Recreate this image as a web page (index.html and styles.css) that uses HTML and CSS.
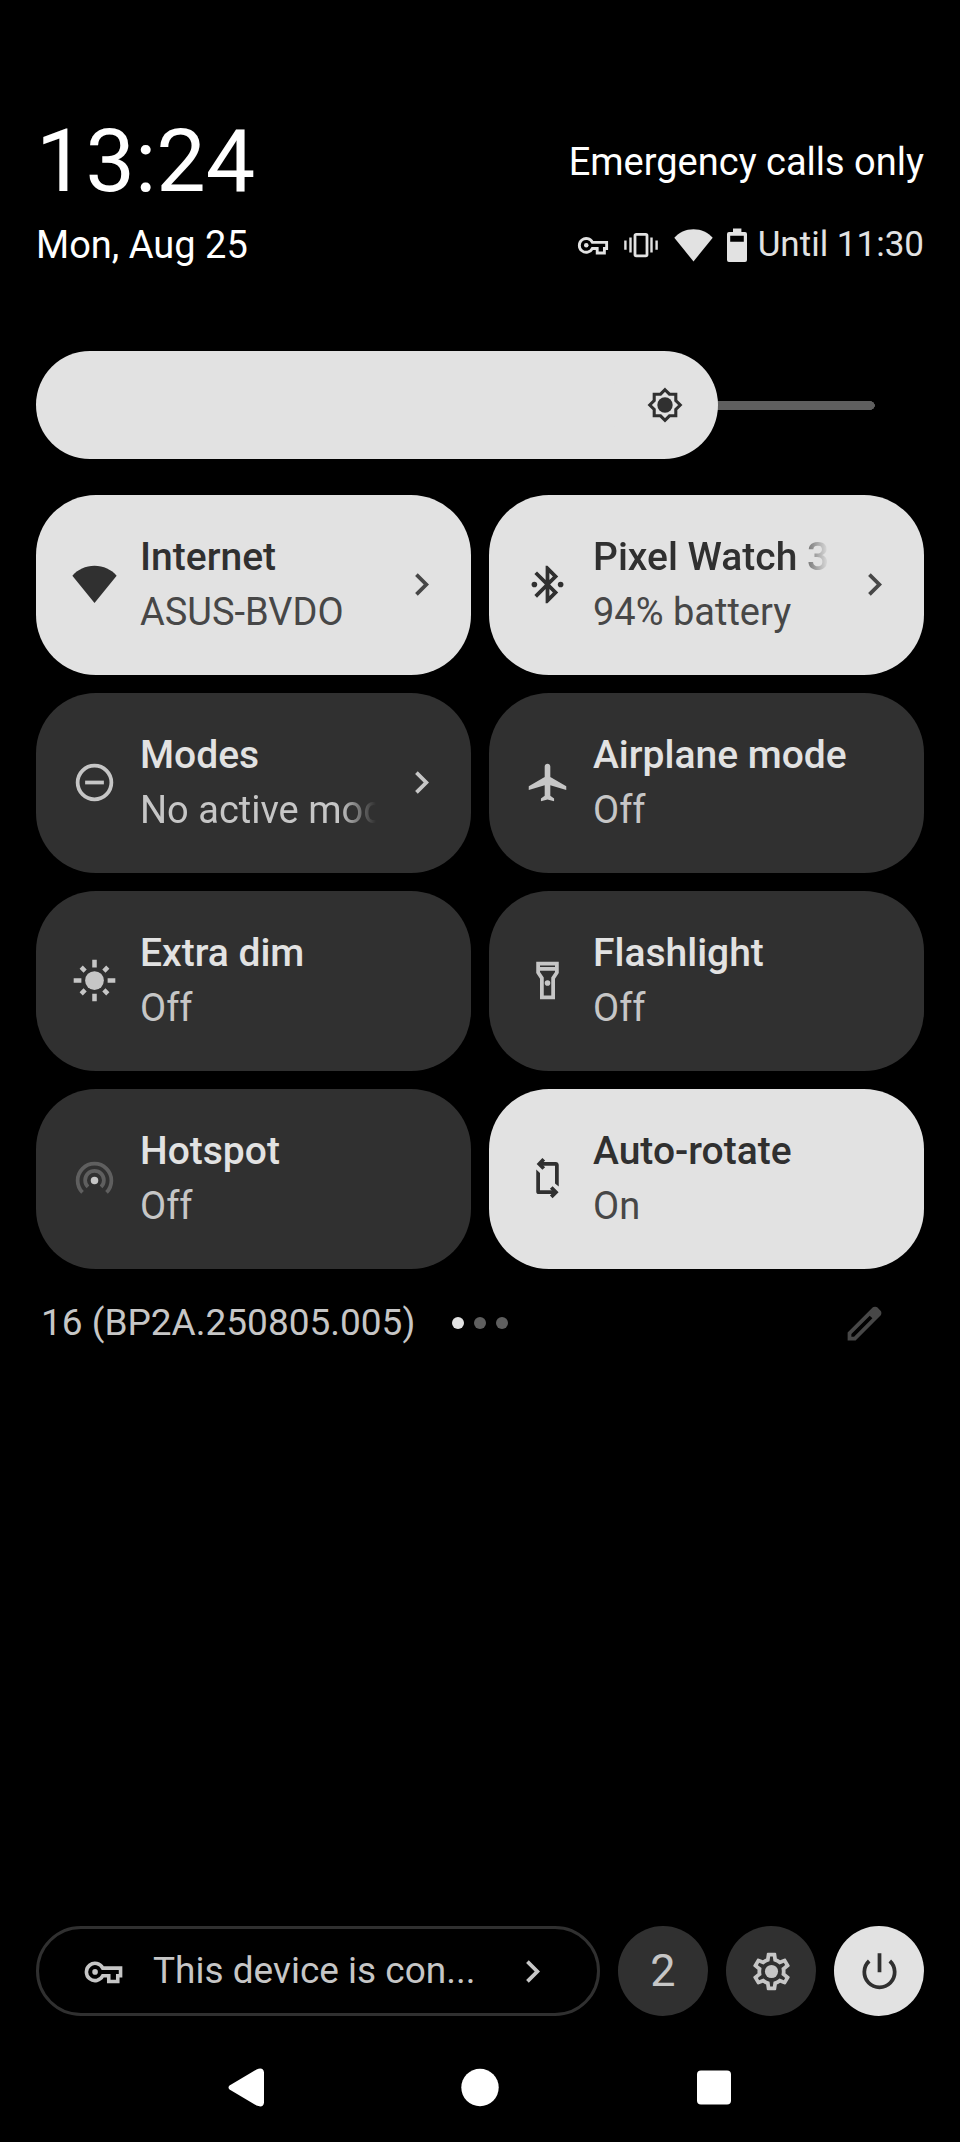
FILE: index.html
```html
<!DOCTYPE html>
<html lang="en">
<head>
  <meta charset="UTF-8">
  <meta name="viewport" content="width=device-width, initial-scale=1.0">
  <title>Quick Settings</title>
  <link rel="stylesheet" href="styles.css">
</head>
<body>

<!-- Shared icons -->
<svg class="sprite" aria-hidden="true">
  <symbol id="wifi" viewBox="0 0 24 24">
    <path d="M12 21.8.2 7.3C2.9 4.1 7.3 2 12 2s9.1 2.1 11.8 5.3z"/>
  </symbol>
  <symbol id="chevron" viewBox="0 0 24 24">
    <path d="M10 6 8.59 7.41 13.17 12l-4.58 4.59L10 18l6-6z"/>
  </symbol>
  <symbol id="key" viewBox="0 0 24 24">
    <path fill="none" stroke="currentColor" stroke-width="1.9" d="M11.6 10.2a4.6 4.6 0 1 0 0 4.1h3.2v3h4.8v-3h1.5v-4.1z"/>
    <circle cx="7.5" cy="12.2" r="1.5"/>
  </symbol>
</svg>

<header class="header">
  <div class="header-row">
    <time class="clock">13:24</time>
    <span class="carrier">Emergency calls only</span>
  </div>
  <div class="header-row">
    <span class="date">Mon, Aug 25</span>
    <div class="status">
      <svg class="status-key"><use href="#key"/></svg>
      <svg class="status-vibrate" viewBox="0 0 34 26">
        <rect x="11" y="2.4" width="12" height="21.4" rx="1.2" fill="none" stroke="currentColor" stroke-width="2.8"/>
        <path d="M5.3 5.6h2.4v15H5.3zM.2 8.6h2.4v9.2H.2zM26.3 5.6h2.4v15h-2.4zM31.4 8.6h2.4v9.2h-2.4z"/>
      </svg>
      <svg class="status-wifi"><use href="#wifi"/></svg>
      <svg class="status-battery" viewBox="0 0 20 34">
        <path fill-rule="evenodd" d="M6 .5h8.4V4H18a2 2 0 0 1 2 2v26a2 2 0 0 1-2 2H2a2 2 0 0 1-2-2V6a2 2 0 0 1 2-2h4zM3.2 7.8v6h13.6v-6z"/>
      </svg>
      <span class="until">Until 11:30</span>
    </div>
  </div>
</header>

<main>
  <div class="brightness">
    <input class="brightness-slider" type="range" min="0" max="1000" value="785" aria-label="Brightness">
    <svg class="brightness-icon" viewBox="0 0 24 24">
      <path fill="none" stroke="currentColor" stroke-width="2" d="M12 2.1 14.9 5H19v4.1l2.9 2.9-2.9 2.9V19h-4.1L12 21.9 9.1 19H5v-4.1L2.1 12 5 9.1V5h4.1z"/>
      <circle cx="12" cy="12" r="5"/>
    </svg>
  </div>

  <section class="tiles">
    <button class="tile active">
      <svg class="icon"><use href="#wifi"/></svg>
      <span class="tile-text">
        <span class="tile-title">Internet</span>
        <span class="tile-state">ASUS-BVDO</span>
      </span>
      <svg class="icon chevron"><use href="#chevron"/></svg>
    </button>

    <button class="tile active">
      <svg class="icon" viewBox="0 0 24 24">
        <path d="M17.71 7.71 12 2h-1v7.59L6.41 5 5 6.41 10.59 12 5 17.59 6.41 19 11 14.41V22h1l5.71-5.71-4.3-4.29zM13 5.83l1.88 1.88L13 9.59zm1.88 10.46L13 18.17v-3.76z"/>
        <circle cx="5" cy="12" r="1.5"/>
        <circle cx="19" cy="12" r="1.5"/>
      </svg>
      <span class="tile-text">
        <span class="tile-title fade">Pixel Watch 3</span>
        <span class="tile-state">94% battery</span>
      </span>
      <svg class="icon chevron"><use href="#chevron"/></svg>
    </button>

    <button class="tile">
      <svg class="icon" viewBox="0 0 24 24">
        <circle cx="12" cy="12" r="9" fill="none" stroke="currentColor" stroke-width="2"/>
        <path d="M7 11h10v2H7z"/>
      </svg>
      <span class="tile-text">
        <span class="tile-title">Modes</span>
        <span class="tile-state fade">No active modes</span>
      </span>
      <svg class="icon chevron"><use href="#chevron"/></svg>
    </button>

    <button class="tile">
      <svg class="icon" viewBox="0 0 24 24">
        <path d="M22 16v-2l-8.5-5V3.5C13.5 2.67 12.83 2 12 2s-1.5.67-1.5 1.5V9L2 14v2l8.5-2.5V19l-2 1.5V22l3.5-1 3.5 1v-1.5l-2-1.5v-5.5z"/>
      </svg>
      <span class="tile-text">
        <span class="tile-title">Airplane mode</span>
        <span class="tile-state">Off</span>
      </span>
    </button>

    <button class="tile">
      <svg class="icon" viewBox="0 0 24 24">
        <circle cx="12" cy="12" r="5"/>
        <path fill="none" stroke="currentColor" stroke-width="2.4" d="M12 .9V5M12 19v4.1M.9 12H5M19 12h4.1M4.9 4.9 7 7M17 17l2.1 2.1M4.9 19.1 7 17M17 7l2.1-2.1"/>
      </svg>
      <span class="tile-text">
        <span class="tile-title">Extra dim</span>
        <span class="tile-state">Off</span>
      </span>
    </button>

    <button class="tile">
      <svg class="icon" viewBox="0 0 24 24">
        <path fill-rule="evenodd" d="M6 2h12v6l-2 3v11H8V11L6 8zm2 2v.8h8V4zm0 2.8v.6l2 3V20h4v-9.6l2-3v-.6z"/>
        <circle cx="12" cy="13.3" r="1.5"/>
      </svg>
      <span class="tile-text">
        <span class="tile-title">Flashlight</span>
        <span class="tile-state">Off</span>
      </span>
    </button>

    <button class="tile">
      <svg class="icon" viewBox="0 0 24 24">
        <path class="waves" d="M5.6 19.4a9 9 0 1 1 12.8 0M8.5 16.5a5 5 0 1 1 7 0"/>
        <circle cx="12" cy="13" r="2"/>
      </svg>
      <span class="tile-text">
        <span class="tile-title">Hotspot</span>
        <span class="tile-state">Off</span>
      </span>
    </button>

    <button class="tile active">
      <svg class="icon" viewBox="0 0 24 24">
        <path d="M8 3.2h8.6A1.5 1.5 0 0 1 18 4.6v11.7l-2-1.7V5.2H8zM6 7.2l2 1.9v9.2h8v2H7.4A1.4 1.4 0 0 1 6 18.9z"/>
        <path fill="none" stroke="currentColor" stroke-width="2" d="M10 1.7 7.6 4.2 10 6.7M14 16.8l2.5 2.5-2.5 2.5"/>
      </svg>
      <span class="tile-text">
        <span class="tile-title">Auto-rotate</span>
        <span class="tile-state">On</span>
      </span>
    </button>
  </section>

  <div class="pager">
    <span class="build">16 (BP2A.250805.005)</span>
    <div class="dots">
      <span class="dot current"></span>
      <span class="dot"></span>
      <span class="dot"></span>
    </div>
    <button class="edit" aria-label="Edit tiles">
      <svg class="icon" viewBox="0 0 24 24">
        <path fill-rule="evenodd" d="M5 19h1.425L16.2 9.225 14.775 7.8 5 17.575zm-2 2v-4.25L16.2 3.575q.3-.275.663-.425t.762-.15q.4 0 .775.15t.65.45L20.425 5q.3.275.438.65T21 6.4q0 .4-.137.763t-.438.662L7.25 21z"/>
      </svg>
    </button>
  </div>
</main>

<footer>
  <div class="actions">
    <button class="security">
      <svg class="icon"><use href="#key"/></svg>
      <span class="security-text">This device is con...</span>
      <svg class="icon"><use href="#chevron"/></svg>
    </button>
    <button class="round count" aria-label="2 active apps">2</button>
    <button class="round" aria-label="Settings">
      <svg class="icon" viewBox="0 0 24 24">
        <path d="M19.43 12.98c.04-.32.07-.64.07-.98s-.03-.66-.07-.98l2.11-1.65c.19-.15.24-.42.12-.64l-2-3.46c-.09-.16-.26-.25-.44-.25-.06 0-.12.01-.17.03l-2.49 1c-.52-.4-1.08-.73-1.69-.98l-.38-2.65C14.46 2.18 14.25 2 14 2h-4c-.25 0-.46.18-.49.42l-.38 2.65c-.61.25-1.17.59-1.69.98l-2.49-1c-.06-.02-.12-.03-.18-.03-.17 0-.34.09-.43.25l-2 3.46c-.13.22-.07.49.12.64l2.11 1.65c-.04.32-.07.65-.07.98s.03.66.07.98l-2.11 1.65c-.19.15-.24.42-.12.64l2 3.46c.09.16.26.25.44.25.06 0 .12-.01.17-.03l2.49-1c.52.4 1.08.73 1.69.98l.38 2.65c.03.24.24.42.49.42h4c.25 0 .46-.18.49-.42l.38-2.65c.61-.25 1.17-.59 1.69-.98l2.49 1c.06.02.12.03.18.03.17 0 .34-.09.43-.25l2-3.46c.12-.22.07-.49-.12-.64l-2.11-1.65zm-1.98-1.71c.04.31.05.52.05.73 0 .21-.02.43-.05.73l-.14 1.13.89.7 1.08.84-.7 1.21-1.27-.51-1.04-.42-.9.68c-.43.32-.84.56-1.25.73l-1.06.43-.16 1.13-.2 1.35h-1.4l-.19-1.35-.16-1.13-1.06-.43c-.43-.18-.83-.41-1.23-.71l-.91-.7-1.06.43-1.27.51-.7-1.21 1.08-.84.89-.7-.14-1.13c-.03-.31-.05-.54-.05-.74s.02-.43.05-.73l.14-1.13-.89-.7-1.08-.84.7-1.21 1.27.51 1.04.42.9-.68c.43-.32.84-.56 1.25-.73l1.06-.43.16-1.13.2-1.35h1.39l.19 1.35.16 1.13 1.06.43c.43.18.83.41 1.23.71l.91.7 1.06-.43 1.27-.51.7 1.21-1.07.85-.89.7.14 1.13z"/>
        <circle cx="12" cy="12" r="3.5"/>
      </svg>
    </button>
    <button class="round active" aria-label="Power">
      <svg class="icon" viewBox="0 0 24 24">
        <path fill="none" stroke="currentColor" stroke-width="2" d="M12 2.2v10.2M6.5 6.4a8.1 8.1 0 1 0 11 0"/>
      </svg>
    </button>
  </div>

  <nav class="nav">
    <button class="nav-btn" aria-label="Back">
      <svg class="icon" viewBox="0 0 45 45">
        <path d="M5.5 20.4 32.5 4.4Q39.5 1.8 40 7.5v30q-.5 5.7-7.5 3.1l-27-16q-2-2.1 0-4.2z"/>
      </svg>
    </button>
    <button class="nav-btn" aria-label="Home">
      <svg class="icon" viewBox="0 0 45 45"><circle cx="22" cy="22.5" r="18.7"/></svg>
    </button>
    <button class="nav-btn" aria-label="Recent apps">
      <svg class="icon" viewBox="0 0 45 45"><rect x="5" y="5.5" width="34" height="34" rx="4"/></svg>
    </button>
  </nav>
</footer>

</body>
</html>
```
FILE: styles.css
```css
* {
    box-sizing: border-box;
}
body {
    font-family: Roboto, "Noto Sans", sans-serif;
    font-size: 38px;
    line-height: 48px;
    margin: 0;
    padding: 113px 36px 32px;
    min-height: 100vh;
    display: flex;
    flex-direction: column;
    background-color: #000;
    color: #fff;
}
button {
    font: inherit;
    color: inherit;
    background: none;
    border: 0;
    margin: 0;
    padding: 0;
    cursor: pointer;
}
svg {
    display: block;
    flex: none;
    fill: currentColor;
}
.sprite {
    position: absolute;
    width: 0;
    height: 0;
}
.icon {
    width: 45px;
    height: 45px;
}

/* Header */
.header-row {
    display: flex;
    justify-content: space-between;
    align-items: center;
}
.clock {
    font-size: 88px;
    line-height: 96px;
    padding-bottom: 12px;
}
.carrier {
    padding-bottom: 10px;
}
.status {
    display: flex;
    align-items: center;
    color: #e2e2e2;
}
.status-key {
    width: 36px;
    height: 36px;
    margin-right: 13px;
}
.status-vibrate {
    width: 34px;
    height: 26px;
    margin-right: 16px;
}
.status-wifi {
    width: 39px;
    height: 39px;
    margin-right: 14px;
}
.status-battery {
    width: 20px;
    height: 34px;
    margin-right: 11px;
}
.until {
    font-size: 35px;
}

/* Brightness */
.brightness {
    position: relative;
    margin: 82px 49px 36px 0;
}
.brightness-slider {
    -webkit-appearance: none;
    appearance: none;
    display: block;
    width: 100%;
    height: 108px;
    margin: 0;
    border-radius: 54px 0 0 54px;
    background:
        linear-gradient(#e2e2e2, #e2e2e2) left / 75% 100% no-repeat,
        linear-gradient(#5f5f5f, #5f5f5f) left / calc(100% - 4px) 9px no-repeat,
        radial-gradient(circle closest-side, #5f5f5f 90%, transparent) right / 9px 9px no-repeat;
}
.brightness-slider::-webkit-slider-thumb {
    -webkit-appearance: none;
    width: 108px;
    height: 108px;
    border-radius: 50%;
    background: #e2e2e2;
}
.brightness-icon {
    position: absolute;
    top: 50%;
    left: 75%;
    width: 37px;
    height: 37px;
    transform: translate(-50%, -50%);
    color: #303030;
    pointer-events: none;
}

/* Tiles */
.tiles {
    display: grid;
    grid-template-columns: 1fr 1fr;
    gap: 18px;
}
.tile {
    display: flex;
    align-items: center;
    gap: 23px;
    min-width: 0;
    height: 180px;
    padding: 0 27px 1px 36px;
    border-radius: 60px;
    background: #303030;
    color: #c6c6c6;
    font-size: 39px;
    text-align: left;
}
.tile.active {
    background: #e2e2e2;
    color: #303030;
}
.tile-text {
    flex: 1;
    min-width: 0;
    line-height: 55px;
}
.tile-title, .tile-state {
    display: block;
    overflow: hidden;
    white-space: nowrap;
}
.tile-title {
    font-weight: 500;
    color: #e2e2e2;
}
.tile-state {
    font-size: 38px;
}
.tile.active .tile-title {
    color: #303030;
}
.tile.active .tile-state, .tile.active .chevron {
    color: #474747;
}
.fade {
    -webkit-mask-image: linear-gradient(to left, transparent, #000 36px);
    mask-image: linear-gradient(to left, transparent, #000 36px);
}
.waves {
    fill: none;
    stroke: #5f5f5f;
    stroke-width: 2;
}

/* Build number, page dots, edit */
.pager {
    display: grid;
    grid-template-columns: 1fr auto 1fr;
    align-items: center;
    margin-top: 30px;
}
.build {
    padding-left: 5px;
    color: #c6c6c6;
    font-size: 37px;
    white-space: nowrap;
}
.dots {
    display: flex;
    gap: 10px;
}
.dot {
    width: 12px;
    height: 12px;
    border-radius: 50%;
    background: #5f5f5f;
}
.dot.current {
    background: #e2e2e2;
}
.edit {
    justify-self: end;
    margin-right: 37px;
    color: #474747;
}

/* Bottom actions */
footer {
    margin-top: auto;
}
.actions {
    display: flex;
    gap: 18px;
    color: #c6c6c6;
}
.security {
    flex: 1;
    min-width: 0;
    height: 90px;
    display: flex;
    align-items: center;
    gap: 27px;
    padding: 0 42px;
    border: 3px solid #303030;
    border-radius: 45px;
    font-size: 37px;
    text-align: left;
}
.security-text {
    flex: 1;
    min-width: 0;
    overflow: hidden;
    white-space: nowrap;
}
.round {
    width: 90px;
    height: 90px;
    display: flex;
    align-items: center;
    justify-content: center;
    border-radius: 50%;
    background: #303030;
}
.round.active {
    background: #e2e2e2;
    color: #303030;
}
.count {
    font-size: 45px;
}

/* Navigation bar */
.nav {
    display: flex;
    justify-content: center;
    gap: 189px;
    margin-top: 49px;
}
```
